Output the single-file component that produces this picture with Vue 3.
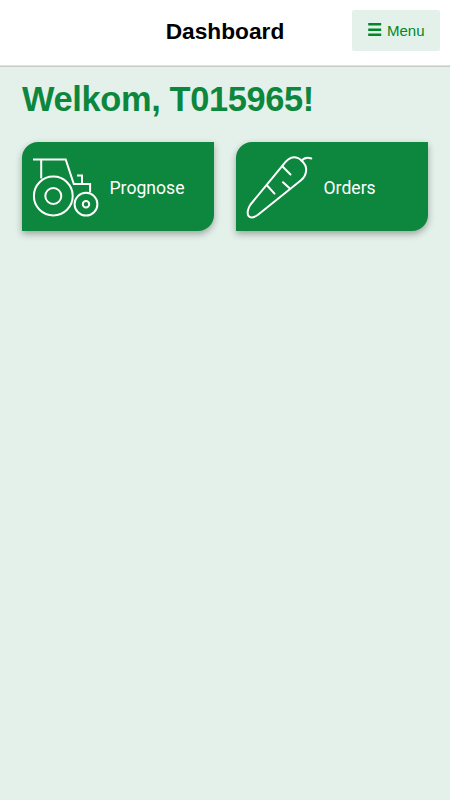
<template>
  <div class="dashboard">
    <header class="dashboard__header">
      <h1 class="dashboard__title">Dashboard</h1>
      <button class="dashboard__menu" type="button">
        <svg class="dashboard__menu-icon" width="14" height="14" viewBox="0 0 14 14">
          <path d="M0.2 2.3h13M0.2 7.7h13M0.2 12.7h13" />
        </svg>
        <span>Menu</span>
      </button>
    </header>

    <main class="dashboard__content">
      <h2 class="dashboard__welcome">Welkom, {{ username }}!</h2>

      <div class="dashboard__tiles">
        <a v-for="tile in tiles" :key="tile.icon" class="tile">
          <svg v-if="tile.icon === 'tractor'" class="tile__icon" viewBox="0 0 86 90">
            <path d="M11 17.4h32.7l8.1 24.6h16.3v8.6M19.2 17.4v19M55 33.6h5v8.4" />
            <circle cx="31.3" cy="54" r="19.4" />
            <circle cx="31.3" cy="54" r="8" />
            <circle cx="64" cy="62.2" r="11.4" />
            <circle cx="64" cy="62.2" r="3.2" />
          </svg>
          <svg v-else class="tile__icon tile__icon--round" viewBox="0 0 86 90">
            <path
              d="M14.5 62.5L46.3 23.8C50.5 18 53.5 15.2 58 15.2C61 15.2 63.5 16.3 65.7 18.7C68.8 21.5 70.2 24 70.2 27.5C70.2 32 69 35 65 38.3L22 72.8C18 75.6 14.2 76 12.5 73.8C11 71.8 11.5 66.8 14.5 62.5Z"
            />
            <path d="M65.7 18.7C68.2 15.8 71.5 15 75.3 16.5" />
            <path d="M46.3 24.2l8.2 8.3M47 40.2l6.3 5.8M30.9 43.3l7.6 8.3" />
          </svg>
          <span class="tile__label">{{ tile.label }}</span>
        </a>
      </div>
    </main>
  </div>
</template>

<script setup>
const username = 'T015965'

const tiles = [
  { icon: 'tractor', label: 'Prognose' },
  { icon: 'carrot', label: 'Orders' },
]
</script>

<style>
body {
  margin: 0;
  background-color: #e4f1ea;
}
</style>

<style scoped>
.dashboard {
  min-height: 100vh;
  background-color: #e4f1ea;
  font-family: 'Liberation Sans', Arial, sans-serif;
}

.dashboard__header {
  box-sizing: border-box;
  display: grid;
  grid-template-columns: 1fr auto 1fr;
  align-items: start;
  height: 67px;
  padding: 10px 10px 0;
  background-color: #fff;
  border-bottom: 1px solid #c9cbca;
  box-shadow: inset 0 -1px 0 #e2e2e2;
}

.dashboard__title {
  grid-column: 2;
  margin: 8px 0 0;
  font-size: 22.7px;
  line-height: 27px;
  font-weight: 700;
  color: #000;
}

.dashboard__menu {
  display: flex;
  justify-self: end;
  align-items: center;
  gap: 5px;
  box-sizing: border-box;
  width: 88px;
  height: 41px;
  padding: 0 0 0 16px;
  border: 0;
  border-radius: 2px;
  background-color: #e4f1ea;
  color: #008726;
  font-family: 'Liberation Sans', Arial, sans-serif;
  font-size: 15px;
}

.dashboard__menu-icon {
  flex: none;
  margin-bottom: 3px;
  fill: none;
  stroke: #008726;
  stroke-width: 2.5;
}

.dashboard__content {
  padding: 12px 22px 0;
}

.dashboard__welcome {
  margin: 0;
  font-size: 34.4px;
  line-height: 40px;
  font-weight: 700;
  letter-spacing: -0.35px;
  color: #0d873d;
}

.dashboard__tiles {
  display: grid;
  grid-template-columns: 1fr 1fr;
  gap: 22px;
  margin-top: 23px;
}

.tile {
  display: flex;
  align-items: center;
  height: 89.4px;
  border-radius: 16px 0;
  background-color: #0d873d;
  box-shadow: 0 3px 7px rgba(0, 0, 0, 0.32);
  color: #fff;
}

.tile__icon {
  flex: none;
  width: 86px;
  height: 90px;
  fill: none;
  stroke: #fff;
  stroke-width: 2;
}

.tile__icon--round {
  stroke-linecap: round;
  stroke-linejoin: round;
}

.tile__label {
  margin: 2px 0 0 1.5px;
  font-family: Roboto, sans-serif;
  font-size: 17.6px;
}
</style>
